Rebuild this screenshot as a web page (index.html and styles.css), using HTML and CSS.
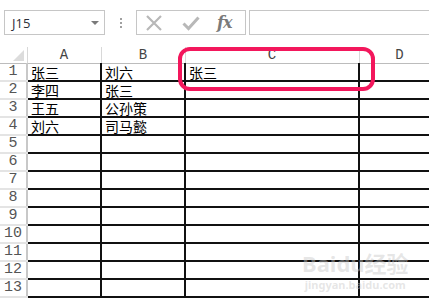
FILE: index.html
```html
<!DOCTYPE html>
<html lang="zh-CN">
<head>
  <meta charset="UTF-8">
  <title>Sheet</title>
  <link rel="stylesheet" href="styles.css">
</head>
<body>

  <!-- Formula bar -->
  <div class="toolbar">
    <div class="name-box">
      <span class="name-text">J15</span>
      <span class="name-arrow"></span>
    </div>
    <div class="grip">
      <span></span><span></span><span></span>
    </div>
    <div class="fn-buttons">
      <svg class="fn-icon" width="18" height="18" viewBox="0 0 18 18">
        <path d="M2 2 L16 16 M16 2 L2 16" stroke="#b8b8b8" stroke-width="2.2" fill="none"/>
      </svg>
      <svg class="fn-icon" width="18" height="18" viewBox="0 0 18 18">
        <path d="M1.5 9.5 L6.5 14.5 L16.5 3.5" stroke="#b8b8b8" stroke-width="3" fill="none"/>
      </svg>
      <span class="fx">fx</span>
    </div>
    <div class="formula-input"></div>
  </div>

  <!-- Grid -->
  <div class="sheet">
    <table class="grid">
      <colgroup>
        <col class="c-head">
        <col class="c-a">
        <col class="c-b">
        <col class="c-c">
        <col class="c-d">
      </colgroup>
      <thead>
        <tr>
          <th class="corner"><span class="corner-tri"></span></th>
          <th>A</th>
          <th>B</th>
          <th>C</th>
          <th>D</th>
        </tr>
      </thead>
      <tbody>
        <tr><th>1</th><td class="edge">张三</td><td>刘六</td><td>张三</td><td></td></tr>
        <tr><th>2</th><td class="edge">李四</td><td>张三</td><td></td><td></td></tr>
        <tr><th>3</th><td class="edge">王五</td><td>公孙策</td><td></td><td></td></tr>
        <tr><th>4</th><td class="edge">刘六</td><td>司马懿</td><td></td><td></td></tr>
        <tr><th>5</th><td></td><td></td><td></td><td></td></tr>
        <tr><th>6</th><td></td><td></td><td></td><td></td></tr>
        <tr><th>7</th><td></td><td></td><td></td><td></td></tr>
        <tr><th>8</th><td></td><td></td><td></td><td></td></tr>
        <tr><th>9</th><td></td><td></td><td></td><td></td></tr>
        <tr><th>10</th><td></td><td></td><td></td><td></td></tr>
        <tr><th>11</th><td></td><td></td><td></td><td></td></tr>
        <tr><th>12</th><td></td><td></td><td></td><td></td></tr>
        <tr><th>13</th><td></td><td></td><td></td><td></td></tr>
      </tbody>
    </table>

    <!-- highlight around C1 -->
    <div class="highlight"></div>

    <!-- watermark -->
    <div class="watermark">
      <span class="wm-logo">Baidu经验</span>
      <span class="wm-url">jingyan.baidu.com</span>
    </div>
  </div>

</body>
</html>
```

FILE: styles.css
```css
/* Page */
body {
  margin: 0;
  background-color: #fff;
  width: 429px;
  height: 300px;
  overflow: hidden;
  font-family: "Noto Sans CJK SC", sans-serif;
}

/* Formula bar */
.toolbar {
  display: flex;
  align-items: center;
  height: 25px;
  padding: 10px 0 0 4px;
  margin-bottom: 12px;
}

.name-box {
  box-sizing: border-box;
  width: 101px;
  height: 25px;
  border: 1px solid #c6c6c6;
  display: flex;
  align-items: center;
  justify-content: space-between;
  padding: 0 5px 0 7px;
}

.name-text {
  font-family: "Open Sans", sans-serif;
  font-size: 13px;
  color: #2b2f3a;
}

.name-arrow {
  width: 0;
  height: 0;
  border-left: 4px solid transparent;
  border-right: 4px solid transparent;
  border-top: 4px solid #7a7a7a;
}

.grip {
  width: 31px;
  display: flex;
  flex-direction: column;
  align-items: center;
  gap: 2px;
}

.grip span {
  width: 2px;
  height: 2px;
  background-color: #a0a0a0;
}

.fn-buttons {
  box-sizing: border-box;
  width: 110px;
  height: 25px;
  border: 1px solid #c6c6c6;
  display: flex;
  align-items: center;
  padding-left: 8px;
  gap: 19px;
}

.fx {
  font-family: "DejaVu Serif", serif;
  font-style: italic;
  font-weight: bold;
  font-size: 16px;
  color: #7a7a7a;
  margin-left: -2px;
  letter-spacing: -1px;
}

.formula-input {
  box-sizing: border-box;
  flex: 1;
  height: 25px;
  margin-left: 3px;
  border: 1px solid #c6c6c6;
  border-right: none;
}

/* Sheet */
.sheet {
  position: relative;
}

.grid {
  border-collapse: collapse;
  table-layout: fixed;
  width: 440px;
}

.c-head { width: 27px; }
.c-a { width: 74px; }
.c-b { width: 84px; }
.c-c { width: 174px; }
.c-d { width: 81px; }

thead th {
  height: 16px;
  padding: 0;
  font-family: "Liberation Mono", monospace;
  font-weight: normal;
  font-size: 14px;
  line-height: 16px;
  color: #444;
  border-right: 1px solid #d8d8d8;
  border-bottom: 1px solid #bcbcbc;
}

.corner {
  position: relative;
}

.corner-tri {
  position: absolute;
  right: 3px;
  bottom: 2px;
  width: 0;
  height: 0;
  border-left: 11px solid transparent;
  border-bottom: 11px solid #dcdcdc;
}

tbody th {
  height: 16px;
  padding: 0;
  font-family: "Liberation Mono", monospace;
  font-weight: normal;
  font-size: 15px;
  line-height: 16px;
  color: #555;
  text-align: center;
  border-right: 2px solid #c8c8c8;
  border-bottom: 2px solid #e4e4e4;
}

td {
  height: 16px;
  padding: 0 0 0 3px;
  font-size: 14px;
  line-height: 16px;
  color: #000;
  white-space: nowrap;
  border-right: 2px solid #111;
  border-bottom: 2px solid #111;
}

td.edge {
  border-left: 2px solid #111;
}

/* Red rounded box around C1 */
.highlight {
  position: absolute;
  left: 178px;
  top: 0;
  width: 189px;
  height: 36px;
  border: 4px solid #f3175c;
  border-radius: 12px;
}

/* Faint watermark */
.watermark {
  position: absolute;
  left: 302px;
  top: 204px;
  display: flex;
  flex-direction: column;
  align-items: center;
  gap: 4px;
  color: rgba(200, 200, 200, 0.45);
}

.wm-logo {
  font-family: "Noto Sans", "Noto Sans CJK SC", sans-serif;
  font-size: 22px;
  font-weight: bold;
  line-height: 24px;
}

.wm-url {
  font-family: "Noto Sans", sans-serif;
  font-size: 11px;
  font-weight: bold;
  line-height: 12px;
}
```
